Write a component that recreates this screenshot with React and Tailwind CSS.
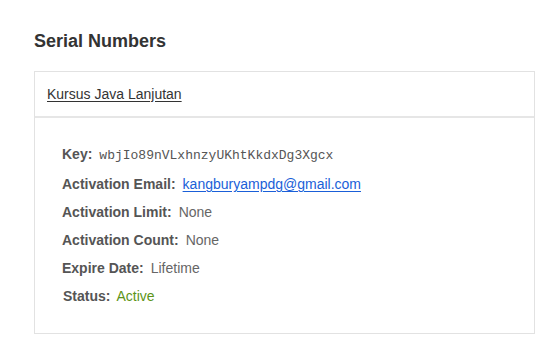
export default function App() {
  const rows = [
    { label: 'Activation Limit:', value: 'None' },
    { label: 'Activation Count:', value: 'None' },
    { label: 'Expire Date:', value: 'Lifetime' },
  ]

  return (
    <div className="w-[560px] h-[350px] bg-white font-['Liberation_Sans',Arial,sans-serif] pt-[29px] pl-[34px] pr-[25px]">
      <h2 className="text-[18px] leading-[24px] font-bold text-[#333]">Serial Numbers</h2>

      <div className="mt-[18px] border border-[#e2e2e2]">
        <div className="h-[46px] flex items-center px-[12px] border-b-2 border-[#e6e6e6]">
          <a href="#" className="text-[14px] text-[#333] underline underline-offset-2">Kursus Java Lanjutan</a>
        </div>

        <div className="pt-[22px] pb-[23px] pl-[27px] text-[14px] leading-[28px] text-[#555]">
          <div className="flex items-baseline">
            <span className="font-bold mr-[7px]">Key:</span>
            <span className="font-['Liberation_Mono',monospace] text-[13px] text-[#555]">wbjIo89nVLxhnzyUKhtKkdxDg3Xgcx</span>
          </div>
          <div className="flex items-baseline">
            <span className="font-bold mr-[7px]">Activation Email:</span>
            <a href="#" className="text-[#1a5fd8] underline underline-offset-2">kangburyampdg@gmail.com</a>
          </div>
          {rows.map(r => (
            <div key={r.label} className="flex items-baseline">
              <span className="font-bold mr-[7px]">{r.label}</span>
              <span className="text-[#666]">{r.value}</span>
            </div>
          ))}
          <div className="flex items-baseline pl-px">
            <span className="font-bold mr-[6px]">Status:</span>
            <span className="text-[#5c9418]">Active</span>
          </div>
        </div>
      </div>
    </div>
  )
}
